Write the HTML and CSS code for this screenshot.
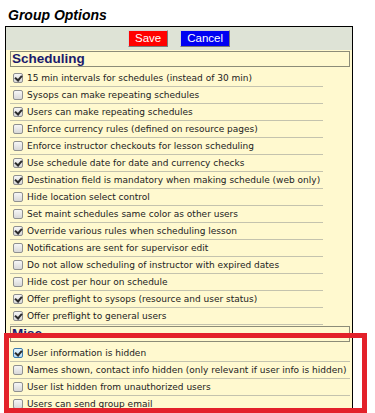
FILE: index.html
```html
<!DOCTYPE html>
<html>
<head>
<meta charset="utf-8">
<title>Group Options</title>
<link rel="stylesheet" href="styles.css">
</head>
<body>
  <h1 class="title">Group Options</h1>
  <div class="panel">
    <div class="toolbar">
      <button class="btn btn-save">Save</button>
      <button class="btn btn-cancel">Cancel</button>
    </div>

    <div class="section-head">Scheduling</div>
    <div class="opts opts-sched">
      <label class="opt"><span class="cb on"></span>15 min intervals for schedules (instead of 30 min)</label>
      <label class="opt"><span class="cb"></span>Sysops can make repeating schedules</label>
      <label class="opt"><span class="cb on"></span>Users can make repeating schedules</label>
      <label class="opt"><span class="cb"></span>Enforce currency rules (defined on resource pages)</label>
      <label class="opt"><span class="cb"></span>Enforce instructor checkouts for lesson scheduling</label>
      <label class="opt"><span class="cb on"></span>Use schedule date for date and currency checks</label>
      <label class="opt"><span class="cb on"></span>Destination field is mandatory when making schedule (web only)</label>
      <label class="opt"><span class="cb"></span>Hide location select control</label>
      <label class="opt"><span class="cb"></span>Set maint schedules same color as other users</label>
      <label class="opt"><span class="cb on"></span>Override various rules when scheduling lesson</label>
      <label class="opt"><span class="cb"></span>Notifications are sent for supervisor edit</label>
      <label class="opt"><span class="cb"></span>Do not allow scheduling of instructor with expired dates</label>
      <label class="opt"><span class="cb"></span>Hide cost per hour on schedule</label>
      <label class="opt"><span class="cb on"></span>Offer preflight to sysops (resource and user status)</label>
      <label class="opt"><span class="cb on"></span>Offer preflight to general users</label>
    </div>

    <div class="section-head">Misc</div>
    <div class="opts">
      <label class="opt"><span class="cb on focus"></span>User information is hidden</label>
      <label class="opt"><span class="cb"></span>Names shown, contact info hidden (only relevant if user info is hidden)</label>
      <label class="opt"><span class="cb"></span>User list hidden from unauthorized users</label>
      <label class="opt"><span class="cb"></span>Users can send group email</label>
    </div>
  </div>
  <div class="highlight"></div>
</body>
</html>
```

FILE: styles.css
```css
body {
  margin: 0;
  background: #fff;
  font-family: "DejaVu Sans", Verdana, sans-serif;
}

.title {
  margin: 0 0 3px;
  padding: 7px 8px 0;
  font-family: "Liberation Sans", Arial, sans-serif;
  font-size: 14px;
  line-height: 16px;
  font-style: italic;
  font-weight: bold;
  color: #000;
}

.panel {
  width: 348px;
  margin-left: 5px;
  box-sizing: border-box;
  border: 1px solid #000;
  background: #fff9cf;
  padding-bottom: 20px;
}

.toolbar {
  height: 23px;
  background: #dee3d6;
  display: flex;
  justify-content: center;
  align-items: center;
  gap: 12px;
}

.btn {
  height: 17px;
  padding: 0 6px;
  border: 1px solid;
  border-color: #d6d6d6 #7a7a7a #7a7a7a #d6d6d6;
  font-family: "Liberation Sans", Arial, sans-serif;
  font-size: 11.5px;
  line-height: 15px;
  color: #fff;
}
.btn-save { background: #f00; }
.btn-cancel { background: #0000f2; padding: 0 6px; }

.section-head {
  margin: 1px 2px 0 4px;
  height: 16px;
  box-sizing: border-box;
  border: 1px solid #8c8c78;
  padding-left: 1px;
  font-family: "Liberation Sans", Arial, sans-serif;
  font-size: 13.5px;
  font-weight: bold;
  line-height: 14px;
  color: #1b1b6c;
}

.opts {
  margin: 3px 2px 0 4px;
  display: flex;
  flex-direction: column;
}
.opts-sched { width: 313px; }

.opt {
  height: 16px;
  border-bottom: 1px solid #c4c3ae;
  display: flex;
  align-items: center;
  gap: 4px;
  padding-left: 3px;
  font-size: 9px;
  color: #222;
  white-space: nowrap;
}

.cb {
  width: 10px;
  height: 10px;
  box-sizing: border-box;
  border: 1px solid #8f9090;
  border-radius: 2px;
  background: linear-gradient(#f6f6f6, #d8d8d8);
  flex: none;
  position: relative;
}
.cb.on::after {
  content: "";
  position: absolute;
  left: 2px;
  top: 0px;
  width: 3px;
  height: 5px;
  border: solid #2b2b2b;
  border-width: 0 2px 2px 0;
  transform: rotate(40deg);
}
.cb.focus {
  border-color: #3d7bad;
  background: linear-gradient(#e4f3fc, #b6ddf7);
}

.highlight {
  position: absolute;
  left: 4px;
  top: 333px;
  width: 363px;
  height: 80px;
  box-sizing: border-box;
  border: 5px solid #e3212a;
}
```
